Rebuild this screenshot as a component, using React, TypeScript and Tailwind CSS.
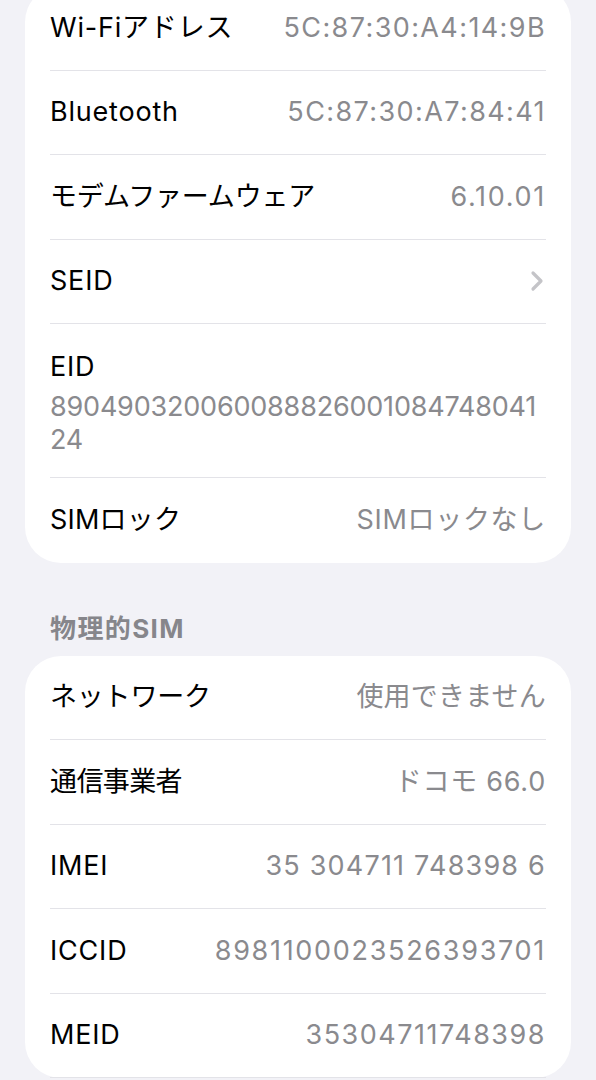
import React from "react";

const font = { fontFamily: 'Inter, "Noto Sans CJK JP", "Noto Sans", sans-serif' };

function Row({
  label,
  value,
  chevron,
  last,
  lt = "tracking-[0.8px]",
  vt = "tracking-[1.4px]",
}: {
  label: string;
  value?: string;
  chevron?: boolean;
  last?: boolean;
  lt?: string;
  vt?: string;
}) {
  return (
    <div className="pl-[25px] pr-[25px]">
      <div className={`h-[84.5px] flex items-center justify-between ${last ? "" : "border-b border-[#e3e3e8]"}`}>
        <span className={`text-[27px] text-black whitespace-nowrap ${lt}`}>{label}</span>
        {value && <span className={`text-[27px] text-[#8a8a8e] whitespace-nowrap ${vt}`}>{value}</span>}
        {chevron && (
          <svg width="14" height="22" viewBox="0 0 14 22" className="mr-[2px]">
            <path d="M3 3 L11 11 L3 19" fill="none" stroke="#c4c4c8" strokeWidth="3.2" strokeLinecap="round" strokeLinejoin="round" />
          </svg>
        )}
      </div>
    </div>
  );
}

export default function App() {
  return (
    <div className="w-[596px] h-[1080px] overflow-hidden bg-[#f2f2f7]" style={font}>
      <div className="mx-[25px] mt-[-14px] bg-white rounded-[36px]">
        <Row label="Wi-Fiアドレス" value="5C:87:30:A4:14:9B" />
        <Row label="Bluetooth" value="5C:87:30:A7:84:41" />
        <Row label="モデムファームウェア" value="6.10.01" lt="tracking-[-0.2px]" vt="tracking-[1.7px]" />
        <Row label="SEID" chevron />
        <div className="pl-[25px] pr-[25px]">
          <div className="h-[154px] border-b border-[#e3e3e8] pt-[27px]">
            <div className="text-[27px] text-black leading-[32px] tracking-[0.8px]">EID</div>
            <div className="text-[27px] text-[#8a8a8e] leading-[33px] mt-[7px] tracking-[-0.2px]">
              890490320060088826001084748041
              <br />
              24
            </div>
          </div>
        </div>
        <Row label="SIMロック" value="SIMロックなし" last lt="tracking-[0.2px]" vt="tracking-[0.7px]" />
      </div>

      <div className="pl-[50px] pt-[50px] pb-[11px] text-[26px] font-bold text-[#86868b] leading-[32px] tracking-[1.4px]">
        物理的SIM
      </div>

      <div className="mx-[25px] bg-white rounded-[36px]">
        <Row label="ネットワーク" value="使用できません" lt="tracking-[-0.2px]" vt="tracking-[0.2px]" />
        <Row label="通信事業者" value="ドコモ 66.0" lt="tracking-[-0.6px]" vt="tracking-[0.75px]" />
        <Row label="IMEI" value="35 304711 748398 6" vt="tracking-[1.2px]" />
        <Row label="ICCID" value="8981100023526393701" vt="tracking-[1.7px]" />
        <Row label="MEID" value="35304711748398" vt="tracking-[1.5px]" />
      </div>
    </div>
  );
}
